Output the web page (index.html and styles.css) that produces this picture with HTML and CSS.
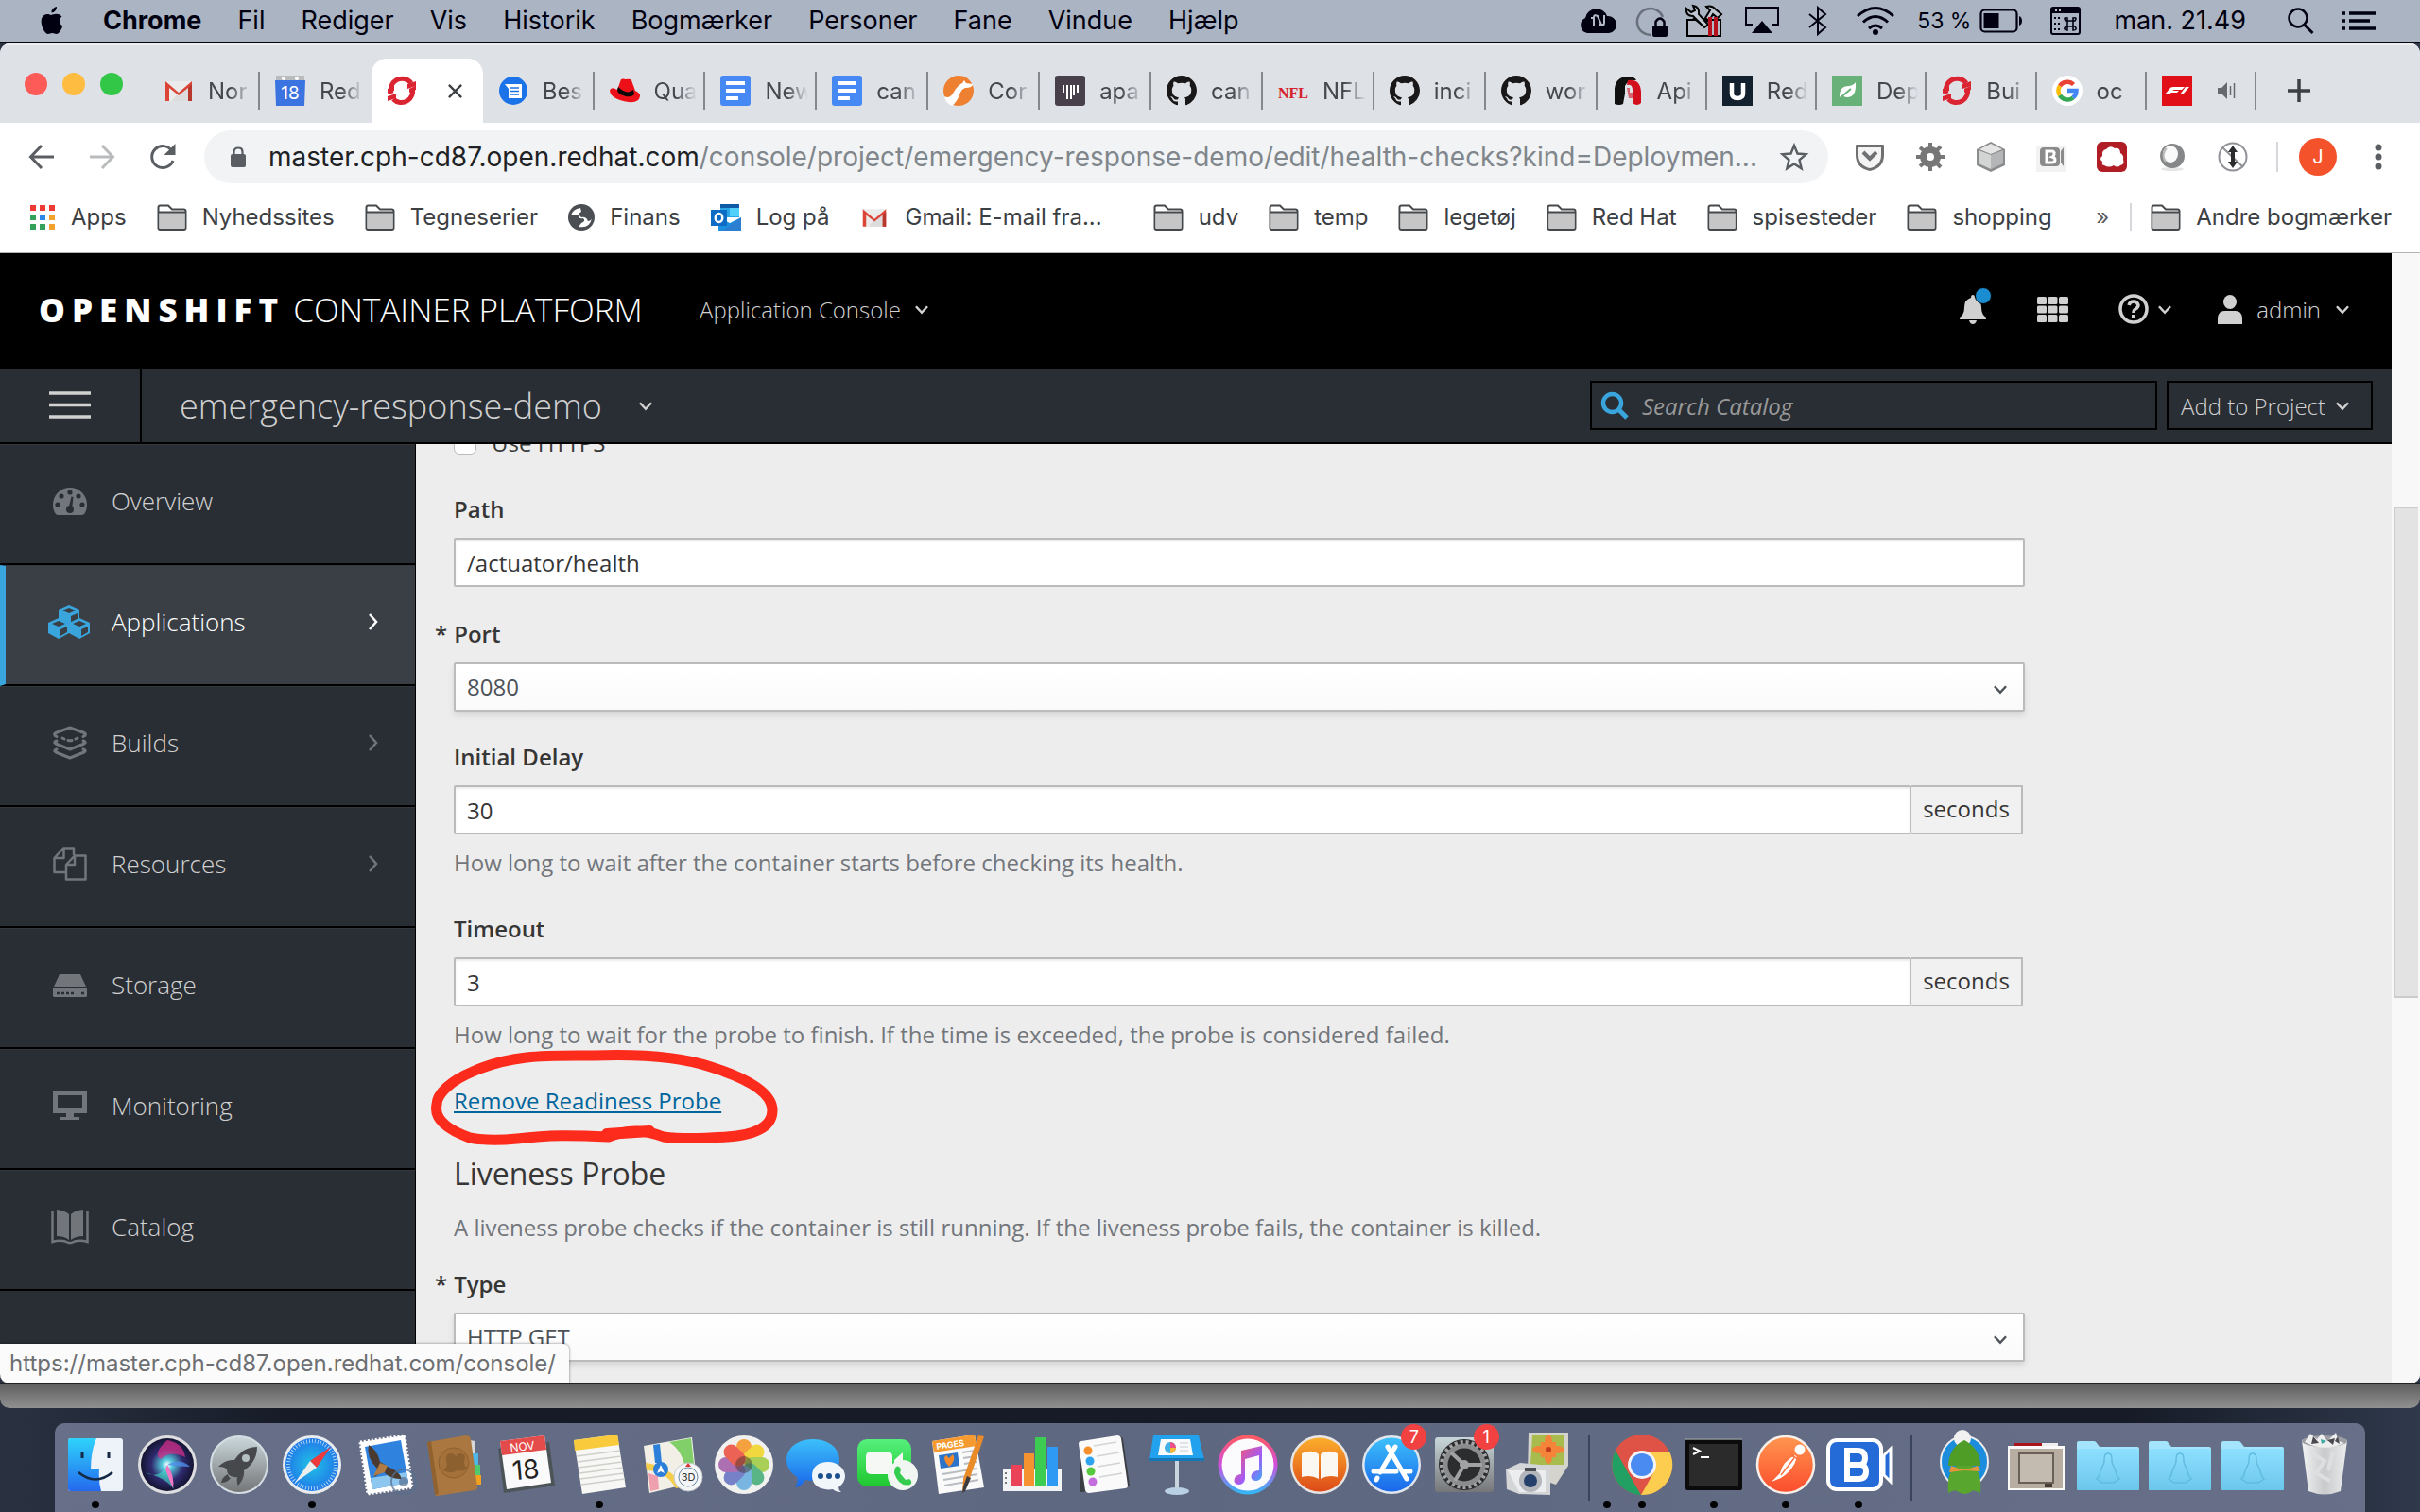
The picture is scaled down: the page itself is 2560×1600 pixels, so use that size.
FILE: index.html
```html
<!DOCTYPE html>
<html lang="da">
<head>
<meta charset="utf-8">
<title>OpenShift Container Platform</title>
<link rel="stylesheet" href="styles.css">
</head>
<body>
<svg class="defs" width="0" height="0" aria-hidden="true">
  <defs>
    <linearGradient id="gFinder" x1="0" y1="0" x2="0" y2="1"><stop offset="0" stop-color="#2fd3fb"/><stop offset="1" stop-color="#2469ee"/></linearGradient>
    <linearGradient id="gBlue" x1="0" y1="0" x2="0" y2="1"><stop offset="0" stop-color="#3cc0fb"/><stop offset="1" stop-color="#1a67ea"/></linearGradient>
    <radialGradient id="gSafari"><stop offset="0" stop-color="#22c3e6"/><stop offset="1" stop-color="#1f78e8"/></radialGradient>
    <linearGradient id="gSteel" x1="0" y1="0" x2="0" y2="1"><stop offset="0" stop-color="#c9d7da"/><stop offset="1" stop-color="#757678"/></linearGradient>
    <linearGradient id="gOrange" x1="0" y1="0" x2="0" y2="1"><stop offset="0" stop-color="#fcae2c"/><stop offset="1" stop-color="#dd4a18"/></linearGradient>
    <linearGradient id="gGreen" x1="0" y1="0" x2="0" y2="1"><stop offset="0" stop-color="#55f07c"/><stop offset="1" stop-color="#1fc72f"/></linearGradient>
    <linearGradient id="gPink" x1="0" y1="0" x2="0" y2="1"><stop offset="0" stop-color="#fb5b63"/><stop offset="0.5" stop-color="#d24ddf"/><stop offset="1" stop-color="#37b6f6"/></linearGradient>
    <linearGradient id="gNote" x1="0" y1="0" x2="1" y2="1"><stop offset="0" stop-color="#ff5562"/><stop offset="0.6" stop-color="#a45bf5"/><stop offset="1" stop-color="#2fb3f5"/></linearGradient>
    <linearGradient id="gPost" x1="0" y1="0" x2="0" y2="1"><stop offset="0" stop-color="#ff9650"/><stop offset="1" stop-color="#fb4c2c"/></linearGradient>
    <linearGradient id="gFolder" x1="0" y1="0" x2="0" y2="1"><stop offset="0" stop-color="#8ee0fe"/><stop offset="1" stop-color="#6bc6ec"/></linearGradient>
    <linearGradient id="gTrash" x1="0" y1="0" x2="1" y2="0"><stop offset="0" stop-color="#f2f3f4"/><stop offset="0.5" stop-color="#c9cacc"/><stop offset="1" stop-color="#eceded"/></linearGradient>
    <radialGradient id="gSiri"><stop offset="0" stop-color="#ffffff"/><stop offset="0.2" stop-color="#56c9dd"/><stop offset="0.6" stop-color="#2f2a6e"/><stop offset="1" stop-color="#141432"/></radialGradient>
    <symbol id="folder" viewBox="0 0 32 28"><path d="M1.500 25V3.500q0-2 2-2h8.500l4 4h12.500q2 0 2 2V25q0 2-2 2h-25q-2 0-2-2z" fill="#fff" stroke="#46494c" stroke-width="2"/><path d="M2.500 9h27v15.500q0 1.500-1.500 1.500h-24q-1.500 0-1.500-1.500z" fill="#c6c6c6"/><path d="M2 8.500h28" stroke="#46494c" stroke-width="2"/></symbol>
    <symbol id="gmail" viewBox="0 0 32 32"><path d="M2 6h28v21H2z" fill="#ebebeb"/><path d="M16 18L28 8v19H9z" fill="#dcdcdc"/><path d="M2 27V6l14 12L30 6v21h-4V13L16 21 6 13v14z" fill="#dc4437"/><path d="M26 13l4-4v18h-4z" fill="#b8372c"/></symbol>
    <symbol id="openshift" viewBox="0 0 32 32"><path d="M5 19A12 12 0 0 1 26 8M27 13A12 12 0 0 1 7 25" fill="none" stroke="#db2432" stroke-width="5"/><path d="M1 14l7-3v5l-7 3zM22 9l9-3v5l-9 3zM1 22l9-3v5l-9 3zM24 14l7-3v4l-7 3z" fill="#db2432"/></symbol>
    <symbol id="docs" viewBox="0 0 32 32"><rect width="32" height="32" rx="3" fill="#4688f4"/><path d="M6 6h20v4H6zM6 14h20v4H6zM6 22h13v4H6z" fill="#fff"/></symbol>
    <symbol id="github" viewBox="0 0 16 16"><path fill="#191717" d="M8 0C3.580 0 0 3.580 0 8c0 3.540 2.290 6.530 5.470 7.590.4.070.55-.17.55-.38 0-.19-.01-.82-.01-1.490-2.010.37-2.530-.49-2.690-.94-.09-.23-.48-.94-.82-1.130-.28-.15-.68-.52-.01-.53.63-.01 1.080.58 1.230.82.72 1.210 1.870.87 2.330.66.07-.52.28-.87.51-1.070-1.780-.2-3.640-.89-3.640-3.950 0-.87.31-1.590.82-2.150-.08-.2-.36-1.020.08-2.120 0 0 .67-.21 2.200.82.64-.18 1.320-.27 2-.27s1.360.09 2 .27c1.530-1.040 2.200-.82 2.200-.82.44 1.100.16 1.920.08 2.120.51.56.82 1.270.82 2.150 0 3.070-1.870 3.750-3.650 3.950.29.25.54.73.54 1.480 0 1.070-.01 1.930-.01 2.200 0 .21.15.46.55.38A8.010 8.010 0 0 0 16 8c0-4.420-3.580-8-8-8z"/></symbol>
    <symbol id="down" viewBox="0 0 14 10"><path d="M1.500 2L7 8l5.500-6" fill="none" stroke="currentColor" stroke-width="2.200"/></symbol>
    <symbol id="right" viewBox="0 0 12 20"><path d="M2 2l7 8-7 8" fill="none" stroke="currentColor" stroke-width="2.500"/></symbol>
    <symbol id="cube" viewBox="0 0 22 22"><path d="M11 0l11 5v11l-11 6-11-6V5z" fill="#39a5dc"/><path d="M11 3l7 3-7 3-7-3zM13 12l7-3v6l-7 4z" fill="#393f45"/></symbol>
    <symbol id="dfolder" viewBox="0 0 68 64"><path d="M1 9q0-2 2-2h16q2 0 3 2l3 4h40q2 0 2 2v10H1z" fill="#a5e4fd"/><rect x="1" y="15" width="66" height="44" rx="1" fill="url(#gFolder)"/><path d="M34 20c-4 0-4 4-4 8s-5 10-5 15l-3 4 6 4h12l6-4-3-4c0-5-5-11-5-15s0-8-4-8z" fill="none" stroke="#62bbe0" stroke-width="1.500"/></symbol>
  </defs>
</svg>

<header class="menubar">
  <nav class="menu">
    <svg class="apple" width="28" height="34" viewBox="0 0 28 34"><path d="M19 1c.3 3-2.500 6.500-5.500 6.500C13 4.500 16 1.500 19 1zM24.500 11.500c-3 2-4 7 .8 10-1 3.500-4 8.500-6.500 8.500-2 0-2.500-1-4.500-1s-2.700 1-4.500 1C6 30 .5 18 3.500 12.500c3-5 7-3.500 9.500-2.500 2.500-.8 7.500-3 11.500 1.500z" fill="#000010" transform="translate(0 1)"/></svg>
    <b>Chrome</b><span>Fil</span><span>Rediger</span><span>Vis</span><span>Historik</span><span>Bogmærker</span><span>Personer</span><span>Fane</span><span>Vindue</span><span>Hjælp</span>
  </nav>
  <div class="status">
    <svg width="40" height="28" viewBox="0 0 40 28"><path d="M9 27a8.500 8.500 0 0 1-2-16A12 12 0 0 1 30 9a9 9 0 0 1 2 18z" fill="#000010"/><path d="M16 20V10q0-3 4-1l4 9q3 2 3-2V8M13 11h4M26 18h-4" fill="none" stroke="#b4bbc6" stroke-width="2"/></svg>
    <svg class="lock" width="36" height="34" viewBox="0 0 36 34"><path d="M18 32A14 14 0 1 1 30 13" fill="none" stroke="#68707c" stroke-width="2.500"/><rect x="19" y="22" width="16" height="12" rx="2" fill="#000010"/><path d="M22.500 22v-4q4.500-7 9 0v4" fill="none" stroke="#000010" stroke-width="2.500"/></svg>
    <svg width="40" height="34" viewBox="0 0 40 34"><path d="M3 16h35v17H3z" fill="#b4bbc6" stroke="#000" stroke-width="2"/><path d="M8 14h20l-8 10z" fill="#000"/><path d="M2 4q-1 8 7 8l12 12 4-3L15 10q1-8-6-9l2 5-4 2zM23 2q6-2 10 3l6 5-4 4-5-4-4 7-4-3 5-8z" fill="#c0c6d0" stroke="#000" stroke-width="2"/><path d="M25 13h4v20h-4zM31 13h4v20h-4z" fill="#b5101b"/></svg>
    <svg width="38" height="32" viewBox="0 0 38 32"><path d="M9 20H2V2h34v18h-7" fill="none" stroke="#000010" stroke-width="2"/><path d="M19 16l11 13H8z" fill="#000010"/></svg>
    <svg class="bt" width="22" height="32" viewBox="0 0 22 32"><path d="M2 9l17 14-8 7V2l8 7L2 23" fill="none" stroke="#000010" stroke-width="2"/></svg>
    <svg width="42" height="32" viewBox="0 0 42 32"><path d="M2 11q19-17 38 0M8 17.500q13-12 26 0M14 24q7-6 14 0" fill="none" stroke="#000010" stroke-width="3"/><circle cx="21" cy="28" r="3" fill="#000010"/></svg>
    <span class="pct">53 %</span>
    <svg class="batt" width="46" height="26" viewBox="0 0 46 26"><rect x="1.500" y="1.500" width="38" height="23" rx="4" fill="none" stroke="#000010" stroke-width="2.200"/><path d="M4.500 5h16v16h-16z" fill="#000010"/><path d="M42 8q3 1 3 5t-3 5z" fill="#000010"/></svg>
    <svg width="32" height="30" viewBox="0 0 32 30"><rect x="1" y="1" width="30" height="28" rx="2" fill="none" stroke="#000010" stroke-width="2"/><path d="M2 2h28v5H2z" fill="#000010"/><path d="M5 4h2M9 4h2" stroke="#fff" stroke-width="1.500"/><path d="M4 12h2M8 12h2M4 18h2M8 18h2M4 24h2M8 24h2" stroke="#000010" stroke-width="2"/><path d="M18 15h6v6h-6zM18 15h-2q-3-4 2-3zM24 15h2q3-4-2-3zM18 21h-2q-3 4 2 4zM24 21h2q3 4-2 4z" fill="none" stroke="#000010" stroke-width="1.600"/></svg>
    <span class="clock">man. 21.49</span>
    <svg width="30" height="30" viewBox="0 0 30 30"><circle cx="12" cy="12" r="9.500" fill="none" stroke="#000010" stroke-width="2.500"/><path d="M18.500 19l9 9" stroke="#000010" stroke-width="3"/></svg>
    <svg class="list" width="38" height="22" viewBox="0 0 38 22"><path d="M1 3h4M9 3h28M1 11h4M9 11h22M1 19h4M9 19h28" stroke="#000010" stroke-width="3.500"/></svg>
  </div>
</header>

<div class="window">
  <div class="tabstrip">
    <div class="lights"><i class="red"></i><i class="yellow"></i><i class="green"></i></div>
    <div class="tabs">
      <div class="tab"><svg><use href="#gmail"/></svg><span>Nor</span></div>
      <div class="tab plain"><svg viewBox="0 0 32 32"><path d="M1 0h30v6H1z" fill="#b9bbbd"/><path d="M0 5h32l-1 27H1z" fill="#3b74e0"/><circle cx="9" cy="3" r="2" fill="#fff"/><circle cx="23" cy="3" r="2" fill="#fff"/><text x="16" y="25" text-anchor="middle" class="cal">18</text></svg><span>Red</span></div>
      <div class="tab active"><svg><use href="#openshift"/></svg><svg class="x" viewBox="0 0 18 18"><path d="M2 2l14 14M16 2L2 16" stroke="#3c4043" stroke-width="2.500"/></svg></div>
      <div class="tab"><svg viewBox="0 0 32 32"><circle cx="16" cy="16" r="15" fill="#1a73e8"/><path d="M7 9h18v15H11V14z" fill="#fff"/><path d="M13 13h9M13 16.500h9M13 20h9" stroke="#1a73e8" stroke-width="1.500"/></svg><span>Bes</span></div>
      <div class="tab"><svg viewBox="0 0 32 32"><path d="M8 15L12 4q2-1 5 0 5-1 6 1l4 11q6 3 5 6-1 7-12 6Q1 25 0 16q1-5 8-1z" fill="#ee1018"/><path d="M8 15q0 5 9 7 8 1 9-3l-1-4q-7 6-16-3z" fill="#080808"/></svg><span>Qua</span></div>
      <div class="tab"><svg><use href="#docs"/></svg><span>New</span></div>
      <div class="tab"><svg><use href="#docs"/></svg><span>can</span></div>
      <div class="tab"><svg viewBox="0 0 32 32"><circle cx="16" cy="16" r="16" fill="#ee8131"/><path d="M1 22q5 3 9-3 4-8 10-11l2-3 2 3 7 1q0 4-8 4-5 2-6 8-3 7-8 11-7-3-8-10z" fill="#fff"/></svg><span>Cor</span></div>
      <div class="tab"><svg viewBox="0 0 32 32"><rect width="32" height="32" rx="3" fill="#48404a"/><path d="M9 10v8M13 10v15M17 10v15M20 10v11M24 10v8" stroke="#fff" stroke-width="2"/></svg><span>apa</span></div>
      <div class="tab"><svg><use href="#github"/></svg><span>can</span></div>
      <div class="tab"><svg viewBox="0 0 32 32"><text x="16" y="24" text-anchor="middle" class="nfl">NFL</text></svg><span>NFL</span></div>
      <div class="tab"><svg><use href="#github"/></svg><span>inci</span></div>
      <div class="tab"><svg><use href="#github"/></svg><span>wor</span></div>
      <div class="tab slim"><svg viewBox="0 0 32 32"><path d="M2 30V14Q3 1 17 1q6 0 8 4-9-1-12 6v8l-2 11q-4 2-9 0z" fill="#101010"/><path d="M16 5q13-2 14 12v12q-4 4-9 0V15q0-6-6-5z" fill="#d10f1d"/><path d="M15 13h3v5h3v6h-4z" fill="#d10f1d" opacity=".6"/></svg><span>Api</span></div>
      <div class="tab slim"><svg viewBox="0 0 32 32"><path d="M0 0h32v32H0z" fill="#13212f"/><path d="M10 8v11q0 5 6 5t6-5V8" fill="none" stroke="#fff" stroke-width="4.500"/></svg><span>Red</span></div>
      <div class="tab slim"><svg viewBox="0 0 32 32"><path d="M0 0h32v32H0z" fill="#68b279"/><path d="M25 7q1 16-9 16-3 0-5-2l-3 3q-1-13 10-13 5-1 7-4z" fill="#fff"/><path d="M7 25l13-11" stroke="#68b279" stroke-width="2"/></svg><span>Dep</span></div>
      <div class="tab slim"><svg><use href="#openshift"/></svg><span>Bui</span></div>
      <div class="tab slim"><svg viewBox="0 0 32 32"><circle cx="16" cy="16" r="16" fill="#fff"/><g fill="none" stroke-width="4.500"><path d="M22.500 9.500A9.500 9.500 0 0 0 8 11" stroke="#ea4335"/><path d="M8 11a9.500 9.500 0 0 0 0 10" stroke="#fbbc05"/><path d="M8 21a9.500 9.500 0 0 0 14 2.500" stroke="#34a853"/><path d="M22 23.500q3.500-3 3.500-7.500H16" stroke="#4285f4"/></g></svg><span>oc</span></div>
      <div class="tab slim"><svg viewBox="0 0 32 32"><path d="M0 0h32v32H0z" fill="#e10f17"/><path d="M3 20l5-6q1-2 4-2h12l-3 3h-8l-2 1h7l-2 2H10l-3 2zM22 20l7-8h-4l-6 8z" fill="#fff"/></svg><svg class="sound" viewBox="0 0 20 18"><path d="M0 6h4l6-6v18l-6-6H0z" fill="#66696d"/><path d="M13.500 4v10M17.500 1v16" stroke="#66696d" stroke-width="1.500"/></svg></div>
    </div>
    <button class="newtab" aria-label="Ny fane"><svg width="24" height="24" viewBox="0 0 24 24"><path d="M12 0v24M0 12h24" stroke="#3c4043" stroke-width="3.500"/></svg></button>
  </div>

  <div class="toolbar">
    <svg width="28" height="28" viewBox="0 0 28 28"><path d="M27 14H3M14 2L2.500 14 14 26" fill="none" stroke="#5a5e63" stroke-width="3"/></svg>
    <svg width="28" height="28" viewBox="0 0 28 28"><path d="M1 14h24M14 2l11.500 12L14 26" fill="none" stroke="#b9bbbd" stroke-width="3"/></svg>
    <svg width="28" height="28" viewBox="0 0 28 28"><path d="M24 8A11.500 11.500 0 1 0 25 18" fill="none" stroke="#5a5e63" stroke-width="3"/><path d="M27.500 0v12H15.500z" fill="#5a5e63"/></svg>
    <div class="omnibox">
      <svg width="16" height="22" viewBox="0 0 16 22"><rect y="8" width="16" height="14" rx="2" fill="#5a5e63"/><path d="M3.500 9V6q0-4.500 4.500-4.500T12.500 6v3" fill="none" stroke="#5a5e63" stroke-width="2.200"/></svg>
      <div class="url"><b>master.cph-cd87.open.redhat.com</b>/console/project/emergency-response-demo/edit/health-checks?kind=Deploymen...</div>
      <svg width="30" height="28" viewBox="0 0 30 28"><path d="M15 2l3.500 8.500 9 .8-7 6 2.200 9L15 21.500 7.300 26.300l2.200-9-7-6 9-.8z" fill="none" stroke="#5a5e63" stroke-width="2.400"/></svg>
    </div>
    <div class="exts">
      <svg viewBox="0 0 32 32"><path d="M2 3h28q1 0 1 1v10q0 14-15 17Q1 28 1 14V4q0-1 1-1z" fill="#6f7072"/><path d="M4 6h24v8q0 11-12 14Q4 25 4 14z" fill="#f3f3f3"/><path d="M9 11l7 7 7-7" fill="none" stroke="#6f7072" stroke-width="4"/></svg>
      <svg viewBox="0 0 32 32"><circle cx="16" cy="16" r="7.500" fill="none" stroke="#777" stroke-width="7"/><g stroke="#777" stroke-width="4"><path d="M16 1v6M16 25v6M1 16h6M25 16h6M5 6l5 4M22 22l5 5M5 26l5-4M22 10l5-5"/></g></svg>
      <svg viewBox="0 0 32 32"><path d="M16 0l15 8v17l-15 7-15-7V8z" fill="#8b8c8d"/><path d="M3 9l13 5v15L3 23z" fill="#d3d4d4"/><path d="M29 9l-13 5v15l13-6z" fill="#b5b6b7"/><path d="M4 8l12-6 12 6-12 5z" fill="#e5e5e5"/></svg>
      <svg viewBox="0 0 32 32"><path d="M0 4h32v28H0z" fill="#f2f2f2"/><rect x="4" y="6" width="21" height="20" rx="4" fill="#8b8b8b"/><path d="M11 10h5q4 0 3 3 0 2-2 3 3 1 3 3 0 3-4 3h-5z" fill="none" stroke="#fff" stroke-width="3"/><path d="M26 10l3-4v20l-3-4z" fill="#8b8b8b"/></svg>
      <svg viewBox="0 0 32 32"><rect width="32" height="32" rx="6" fill="#b11d25"/><path d="M8 25q-3 0-2-4-4-3 0-6-1-6 4-7 4-5 9-1 6-1 6 5 4 2 3 7 2 5-3 6-3 3-7 0-5 3-10 0z" fill="#fff"/></svg>
      <svg viewBox="0 0 32 32"><ellipse cx="16" cy="29" rx="12" ry="2" fill="#e6e6e6"/><circle cx="16" cy="15" r="13" fill="#858789"/><ellipse cx="14" cy="13" rx="8" ry="9" fill="#fafafa"/><path d="M10 7a10 10 0 0 0-1 14" fill="none" stroke="#bbb" stroke-width="2"/></svg>
      <svg viewBox="0 0 32 32"><circle cx="16" cy="16" r="14.500" fill="#fff" stroke="#909296" stroke-width="2"/><path d="M5 6l22 21" stroke="#909296" stroke-width="2"/><path d="M16 4l5 7h-3v10h3l-5 7-5-7h3V11h-3z" fill="#2a2c2e"/></svg>
    </div>
    <span class="vsep"></span>
    <span class="avatar">J</span>
    <svg width="8" height="28" viewBox="0 0 8 28"><g fill="#5a5e63"><circle cx="4" cy="4" r="3.500"/><circle cx="4" cy="14" r="3.500"/><circle cx="4" cy="24" r="3.500"/></g></svg>
  </div>

  <nav class="bookmarks">
    <a href="#"><svg class="s28" viewBox="0 0 28 28"><g stroke-width="6" fill="none"><path d="M1 4h6M11 4h6M21 4h6" stroke="#ee3a34"/><path d="M1 14h6" stroke="#34a15a"/><path d="M11 14h6" stroke="#2f86ea"/><path d="M21 14h6" stroke="#f0a22c"/><path d="M1 24h6M11 24h6" stroke="#34a15a"/><path d="M21 24h6" stroke="#f0a22c"/></g></svg>Apps</a>
    <a href="#"><svg><use href="#folder"/></svg>Nyhedssites</a>
    <a href="#"><svg><use href="#folder"/></svg>Tegneserier</a>
    <a href="#"><svg class="s28" viewBox="0 0 28 28"><circle cx="14" cy="14" r="14" fill="#4b4e52"/><path d="M13 4q-8 1-10 8 4-2 8 0 0 4 5 3 3 3-2 5l-3 4q12 2 14-9-1 3-4 3-2-5-7-4-5-4 0-6z" fill="#fff"/></svg>Finans</a>
    <a href="#"><svg viewBox="0 0 32 28"><path d="M10 0h20v14H10z" fill="#2aa5e8"/><path d="M10 0h20v4H10z" fill="#0f5ba8"/><path d="M20 4h10v9H20z" fill="#4fd0fb"/><path d="M8 14l12 6 12-6v14H8z" fill="#1b8fe0"/><path d="M32 14L12 28h20z" fill="#2c7fd0"/><path d="M0 6h17v17H0z" fill="#0f6cc4"/><ellipse cx="8.500" cy="14.500" rx="3.700" ry="4.500" fill="none" stroke="#fff" stroke-width="2.500"/></svg>Log på</a>
    <a href="#" class="wide"><svg><use href="#gmail"/></svg>Gmail: E-mail fra...</a>
    <a href="#"><svg><use href="#folder"/></svg>udv</a>
    <a href="#"><svg><use href="#folder"/></svg>temp</a>
    <a href="#"><svg><use href="#folder"/></svg>legetøj</a>
    <a href="#"><svg><use href="#folder"/></svg>Red Hat</a>
    <a href="#"><svg><use href="#folder"/></svg>spisesteder</a>
    <a href="#"><svg><use href="#folder"/></svg>shopping</a>
    <span class="more">»</span>
    <a href="#" class="other"><svg><use href="#folder"/></svg>Andre bogmærker</a>
  </nav>

  <div class="viewport">
    <div class="page">
      <header class="masthead">
        <div class="brand"><b>OPENSHIFT</b> <span>CONTAINER PLATFORM</span></div>
        <button class="console">Application Console<svg class="chev"><use href="#down"/></svg></button>
        <div class="tools">
          <button class="bell" aria-label="Notifikationer"><svg width="30" height="34" viewBox="0 0 30 34"><path d="M15 2q2 0 2 3 7 2 7 10 0 8 5 11v2H1v-2q5-3 5-11 0-8 7-10 0-3 2-3zM11 29h8q-1 4-4 4t-4-4z" fill="#d1d1d1"/></svg><i></i></button>
          <button aria-label="Programmer"><svg width="33" height="27" viewBox="0 0 33 27"><g fill="#d1d1d1"><rect width="10" height="8" rx="1.500"/><rect x="11.500" width="10" height="8" rx="1.500"/><rect x="23" width="10" height="8" rx="1.500"/><rect y="9.500" width="10" height="8" rx="1.500"/><rect x="11.500" y="9.500" width="10" height="8" rx="1.500"/><rect x="23" y="9.500" width="10" height="8" rx="1.500"/><rect y="19" width="10" height="8" rx="1.500"/><rect x="11.500" y="19" width="10" height="8" rx="1.500"/><rect x="23" y="19" width="10" height="8" rx="1.500"/></g></svg></button>
          <button class="help" aria-label="Hjælp"><svg width="32" height="32" viewBox="0 0 32 32"><circle cx="16" cy="16" r="14" fill="none" stroke="#d1d1d1" stroke-width="3.500"/><path d="M11 12q1-4 5-4t5 4q0 2-3 4-2 1-2 4" fill="none" stroke="#d1d1d1" stroke-width="3.500"/><path d="M14 22h4v4h-4z" fill="#d1d1d1"/></svg><svg class="chev"><use href="#down"/></svg></button>
          <button class="user"><svg width="26" height="31" viewBox="0 0 26 31"><ellipse cx="13" cy="7.500" rx="7" ry="7.500" fill="#d1d1d1"/><path d="M0 31v-7q1-7 7-7h12q6 0 7 7v7z" fill="#d1d1d1"/></svg>admin<svg class="chev"><use href="#down"/></svg></button>
        </div>
      </header>
      <div class="projectbar">
        <button class="burger" aria-label="Menu"><svg width="44" height="29" viewBox="0 0 44 29"><path d="M0 2h44M0 14.500h44M0 27h44" stroke="#d1d1d1" stroke-width="3.500"/></svg></button>
        <button class="project">emergency-response-demo<svg class="chev"><use href="#down"/></svg></button>
        <label class="search"><svg width="30" height="30" viewBox="0 0 30 30"><circle cx="12.500" cy="12.500" r="9.500" fill="none" stroke="#39a5dc" stroke-width="4.500"/><path d="M20 20l8 8" stroke="#39a5dc" stroke-width="5"/></svg><input type="text" placeholder="Search Catalog" aria-label="Search Catalog"></label>
        <button class="add">Add to Project<svg class="chev"><use href="#down"/></svg></button>
      </div>
      <div class="body">
        <nav class="side">
          <a href="#"><svg viewBox="0 0 36 36"><path d="M3 32Q0 28 0 22a18 18 0 0 1 36 0q0 6-3 10-1 1-3 1H6q-2 0-3-1z" fill="#72767b"/><g fill="#292e34"><circle cx="18" cy="9" r="2.600"/><circle cx="9" cy="13" r="2.600"/><circle cx="27" cy="13" r="2.600"/><circle cx="5" cy="22" r="2.600"/><circle cx="31" cy="22" r="2.600"/><circle cx="18" cy="27" r="4"/><path d="M16.500 26l3-12.500 2 .5-1.500 13z"/></g></svg>Overview</a>
          <a href="#" class="current"><svg class="cubes" viewBox="0 0 44 36"><use href="#cube" x="11" y="0" width="22" height="22"/><use href="#cube" x="0" y="14" width="22" height="22"/><use href="#cube" x="22" y="14" width="22" height="22"/></svg>Applications<svg class="go"><use href="#right"/></svg></a>
          <a href="#"><svg viewBox="0 0 36 36"><g fill="none" stroke="#72767b" stroke-width="3" stroke-linecap="round" stroke-linejoin="round"><path d="M3 10.500Q0 9 3 7.500L18 2l15 5.500q3 1.500 0 3M2 10.500l2 1M34 10.500l-2 1"/><path d="M10 13l2 1M16 15.500q2 .7 4 0M24 14l2-1"/><path d="M4 16q-4 1.500-1 3l15 6 15-6q3-1.500-1-3M4 25q-4 1.500-1 3l15 6 15-6q3-1.500-1-3"/></g></svg>Builds<svg class="go"><use href="#right"/></svg></a>
          <a href="#"><svg viewBox="0 0 36 36"><g fill="none" stroke="#72767b" stroke-width="2.500" stroke-linejoin="round"><path d="M13 27H1.500V12L11 1.500h11V9M2 12h9.500V2"/><path d="M14 34.500V19l9-9.500h11.500v25zM14 19h9V10"/></g></svg>Resources<svg class="go"><use href="#right"/></svg></a>
          <a href="#"><svg viewBox="0 0 36 36"><path d="M7 7h22l6 13H1zM0 22h36v8q0 1-2 1H2q-2 0-2-1z" fill="#72767b"/><path d="M4 27h3M9 27h3M14 27h3M19 27h3M30 27h3" stroke="#292e34" stroke-width="2.500"/></svg>Storage</a>
          <a href="#"><svg viewBox="0 0 36 36"><path d="M2.500 4.500h31v19h-31z" fill="none" stroke="#72767b" stroke-width="5"/><path d="M14 26h8v4h6v3H8v-3h6z" fill="#72767b"/></svg>Monitoring</a>
          <a href="#"><svg class="book" viewBox="0 0 40 36"><path d="M6 0q9 1 13 5v27q-5-4-13-4zM34 0q-9 1-13 5v27q5-4 13-4z" fill="#72767b"/><path d="M1.500 2v32q10-3 17 1h3q7-4 17-1V2" fill="none" stroke="#72767b" stroke-width="2.500"/></svg>Catalog</a>
        </nav>
        <main class="content">
          <form class="form">
            <label class="check"><input type="checkbox">Use HTTPS</label>
            <div class="field"><label for="path">Path</label><input id="path" type="text" value="/actuator/health"></div>
            <div class="field required"><label for="port"><span>*</span>Port</label><div class="pick"><select id="port"><option>8080</option></select><svg class="chev"><use href="#down"/></svg></div></div>
            <div class="field"><label for="delay">Initial Delay</label><div class="group"><input id="delay" type="text" value="30"><span>seconds</span></div><p>How long to wait after the container starts before checking its health.</p></div>
            <div class="field"><label for="timeout">Timeout</label><div class="group"><input id="timeout" type="text" value="3"><span>seconds</span></div><p>How long to wait for the probe to finish. If the time is exceeded, the probe is considered failed.</p></div>
            <div class="removal"><a href="#">Remove Readiness Probe</a>
              <svg class="mark" width="390" height="110" viewBox="0 0 390 110"><path d="M20 62C20 50 36 36 58 27 100 8 140 10 186 10 240 8 280 12 310 22 345 33 375 48 375 68 375 86 357 94 327 96 300 98 275 98 260 96 245 90 225 86 202 96 160 94 140 94 105 98 85 100 65 99 55 97 30 88 17 76 20 62z" fill="none" stroke="#fd2b1c" stroke-width="11"/><path d="M200 93l45-3" stroke="#fd2b1c" stroke-width="12" stroke-linecap="round"/></svg></div>
            <h2>Liveness Probe</h2>
            <p class="intro">A liveness probe checks if the container is still running. If the liveness probe fails, the container is killed.</p>
            <div class="field"><label for="type"><span>*</span>Type</label><div class="pick"><select id="type"><option>HTTP GET</option></select><svg class="chev"><use href="#down"/></svg></div></div>
          </form>
        </main>
      </div>
    </div>
    <div class="scroll"><div class="thumb"></div></div>
    <div class="hover">https://master.cph-cd87.open.redhat.com/console/</div>
  </div>
</div>
<div class="behind"></div>

<footer class="dock">
  <div class="app run"><svg viewBox="0 0 64 64"><rect x="3" y="4" width="58" height="56" rx="3" fill="#eef3fa"/><path d="M6 4h27q-6 14-6 33h9q-1 12 2 23H6q-3 0-3-3V7q0-3 3-3z" fill="url(#gFinder)"/><path d="M18 19v6M46 19v6" stroke="#152944" stroke-width="3"/><path d="M14 40q18 15 36 0" fill="none" stroke="#152944" stroke-width="2.500"/></svg></div>
  <div class="app"><svg viewBox="0 0 64 64"><circle cx="32" cy="32" r="31" fill="#dedee0"/><circle cx="32" cy="32" r="28" fill="url(#gSiri)"/><path d="M32 6q17 3 19 18-16-8-26 2Q16 20 32 6z" fill="#d12f88" opacity=".75"/><path d="M8 40q16 8 24-8 4 15 7 26-8-12-31-18z" fill="#43dfc9" opacity=".6"/><path d="M32 32q8 12 6 25-4-9-8-20z" fill="#f077c4"/><path d="M32 32q14-8 24 2-12 0-24-2z" fill="#4f8fe8" opacity=".8"/></svg></div>
  <div class="app"><svg viewBox="0 0 64 64"><circle cx="32" cy="32" r="31" fill="#d3dde2"/><circle cx="32" cy="32" r="29" fill="url(#gSteel)"/><path d="M51 13q-15 0-24 14-9-1-17 7 7 0 9 3 0 5 4 7 5 2 7 1-1 6 1 9 7-8 6-16 14-9 14-25z" fill="#46484b"/><circle cx="39" cy="25" r="4" fill="#b4bfc2"/><path d="M20 42q-6 3-7 9 7 0 10-5-2 0-3-4z" fill="#46484b"/></svg></div>
  <div class="app run"><svg viewBox="0 0 64 64"><circle cx="32" cy="32" r="31" fill="#e9ecef"/><circle cx="32" cy="32" r="28" fill="url(#gSafari)"/><circle cx="32" cy="32" r="25" fill="none" stroke="#a9d4f5" stroke-width="4" stroke-dasharray="1 2"/><path d="M52 13L37 35l-7-7z" fill="#ee3a3c"/><path d="M14 51l16-23 7 7z" fill="#eceded"/></svg></div>
  <div class="app"><svg viewBox="0 0 64 64"><path d="M7 8L54 1l8 55-47 7z" fill="#fff" stroke="#fff" stroke-width="3" stroke-dasharray="2 2"/><path d="M12 13l38-7 8 45-38 7z" fill="#2f82dd"/><path d="M18 46l38-6 2 11-38 7z" fill="#8dc6ee"/><path d="M16 11q9 5 12 18 5 2 8 5 12 4 15 13-11 1-20-8l-9 6 3-9q-12-12-9-25z" fill="#4a3a30"/><path d="M28 30l8 3-3 7-12 4z" fill="#b07b45"/><circle cx="53" cy="50" r="13" fill="none" stroke="#56708f" stroke-width="2" opacity=".7"/><circle cx="53" cy="50" r="5" fill="#56708f" opacity=".7"/></svg></div>
  <div class="app"><svg viewBox="0 0 64 64"><path d="M47 6l6 1v13h-6z" fill="#d8d8d8"/><path d="M48 20h8v12h-8z" fill="#50b8e8"/><path d="M50 32h8v11h-8z" fill="#50c96f"/><path d="M51 43h8v10h-8z" fill="#f2a220"/><path d="M2 8l41-7q4 0 5 4l7 51q0 3-3 3l-40 6q-2 0-2-3z" fill="#a9773f"/><path d="M2 8l4-1 8 56-4 1z" fill="#8f6230"/><circle cx="30" cy="30" r="16" fill="#a4713a" stroke="#8d602f"/><path d="M18 37q7-2 4-9-1-8 5-8 4 0 5 4 2-5 6-4 6 1 3 9 0 5 4 6-5 5-11 3-9 5-16-1z" fill="#8d602f"/></svg></div>
  <div class="app"><svg viewBox="0 0 64 64"><path d="M1 15l6 47 54-8L55 8z" fill="#4c5458"/><path d="M3 7L50 1l7 50-47 7z" fill="#fafafa"/><path d="M3 7L50 1l2 15L5 22z" fill="#e44b4b"/><text x="27" y="17" text-anchor="middle" class="nov" transform="rotate(-7 27 17)">NOV</text><text x="31" y="47" text-anchor="middle" class="n18" transform="rotate(-5 31 47)">18</text></svg></div>
  <div class="app run"><svg viewBox="0 0 64 64"><path d="M5 6L51 0l9 56-46 7z" fill="#f7f7f5"/><path d="M5 6L51 0l2 11L6 17z" fill="#f9cb3c"/><path d="M8 23l46-6M9 29l46-6M10 35l46-6M11 41l46-6M12 47l46-6M13 53l46-6" stroke="#cfcfcb" stroke-width="1.500"/></svg></div>
  <div class="app"><svg viewBox="0 0 64 64"><path d="M2 12L53 3l5 47-50 12z" fill="#f2efe6"/><path d="M29 8l23-4 4 36-10-3q-3-20-17-29z" fill="#80cf68"/><path d="M4 30q24 3 41 25l-9 2Q25 38 5 38z" fill="#f5cd4c"/><path d="M12 11l7-1 2 20h-7z" fill="#2b7fd9"/><path d="M7 41l10 3 1 14-9 2z" fill="#efa0ae"/><circle cx="20" cy="37" r="8" fill="#2b7fd9"/><path d="M20 32l4 9-4-2-4 2z" fill="#fff"/><circle cx="49" cy="45" r="15" fill="#f5f6f7" stroke="#c8ccd0"/><circle cx="49" cy="45" r="10" fill="none" stroke="#6d8aa5"/><path d="M49 30l3 4h-6z" fill="#d33"/><text x="49" y="49" text-anchor="middle" class="t3d">3D</text></svg></div>
  <div class="app"><svg viewBox="0 0 64 64"><circle cx="32" cy="32" r="31" fill="#f1f1f0"/><g opacity=".92"><rect x="24" y="5" width="16" height="26" rx="8" fill="#f79b32"/><rect x="24" y="5" width="16" height="26" rx="8" fill="#f1d62f" transform="rotate(45 32 32)"/><rect x="24" y="5" width="16" height="26" rx="8" fill="#a5cd4b" transform="rotate(90 32 32)"/><rect x="24" y="5" width="16" height="26" rx="8" fill="#4db07c" transform="rotate(135 32 32)"/><rect x="24" y="5" width="16" height="26" rx="8" fill="#6eb1e0" transform="rotate(180 32 32)"/><rect x="24" y="5" width="16" height="26" rx="8" fill="#6d78c4" transform="rotate(225 32 32)"/><rect x="24" y="5" width="16" height="26" rx="8" fill="#a765ad" transform="rotate(270 32 32)"/><rect x="24" y="5" width="16" height="26" rx="8" fill="#ec5748" transform="rotate(315 32 32)"/></g><circle cx="32" cy="32" r="9" fill="#3e2f2a" opacity=".45"/></svg></div>
  <div class="app"><svg viewBox="0 0 64 64"><path d="M29 5c16 0 28 9 28 22S45 49 29 49q-5 0-8-1-4 7-11 8 4-6 2-11Q1 38 1 27C1 14 13 5 29 5z" fill="url(#gBlue)"/><path d="M45 29c10 0 18 7 18 15 0 5-3 9-7 12q0 3 3 5-6 0-9-3C38 60 28 54 28 44s7-15 17-15z" fill="#f1f6fb"/><g fill="#1c4f8d"><circle cx="37" cy="44" r="3"/><circle cx="46" cy="44" r="3"/><circle cx="55" cy="44" r="3"/></g></svg></div>
  <div class="app"><svg viewBox="0 0 64 64"><rect x="0" y="5" width="57" height="50" rx="10" fill="url(#gGreen)"/><rect x="9" y="18" width="28" height="24" rx="5" fill="#f5f8f5"/><path d="M39 27l9-8v22l-9-8z" fill="#f5f8f5"/><circle cx="48" cy="43" r="16" fill="#f2f6f2"/><path d="M41 34q3-2 5 3l-1 4 6 7 4-1q4 3 1 6-12 3-17-12 0-5 2-7z" fill="#34cd50"/></svg></div>
  <div class="app"><svg viewBox="0 0 64 64"><path d="M3 7L48 0l10 56-48 7z" fill="#fafafa"/><path d="M3 7L48 0l2 12L5 19z" fill="#f59a2f"/><path d="M10 22l20-3 2 14-20 3z" fill="#2c74c8"/><path d="M21 34q-8-9-3-12l3 3 4-4q4 6-4 13z" fill="#f58a2a"/><path d="M35 19l13-2M36 25l13-2M37 31l13-2M14 42l36-6M15 48l36-6M16 54l36-6" stroke="#b9bcc0" stroke-width="2"/><text x="8" y="16" class="pages" transform="rotate(-8 8 16)">PAGES</text><path d="M52 1l6 1-16 47-7 13 1-15z" fill="#e98b28"/><path d="M40 44l4 2-6 14-3 2 1-7z" fill="#3c3c40"/></svg></div>
  <div class="app"><svg viewBox="0 0 64 64"><path d="M1 37l62-1v24H1z" fill="#f2f3f5"/><path d="M4 40v14" stroke="#777" stroke-dasharray="2 3" stroke-width="2"/><path d="M10 32h11v23H10z" fill="#ea4256"/><path d="M23 20h11v35H23z" fill="#f59331"/><path d="M35 3h11v52H35z" fill="#3ccc51"/><path d="M48 13h11v42H48z" fill="#2f9af3"/></svg></div>
  <div class="app"><svg viewBox="0 0 64 64"><path d="M8 61q-2 0-2-3L6 8l42-6q3 0 4 3l7 49z" fill="#3b3f44"/><path d="M5 10q0-3 3-3l38-6q3 0 4 3l7 50q0 3-3 3l-38 5q-3 0-4-3z" fill="#fafafa"/><path d="M21 12l24-4M24 23l24-4M25 34l24-4M27 45l24-4" stroke="#d2d3d6" stroke-width="1.500"/><circle cx="15" cy="17" r="4.500" fill="#f58f2b"/><circle cx="17" cy="28" r="4.500" fill="#2fa3ef"/><circle cx="18" cy="39" r="4.500" fill="#57c93d"/><circle cx="20" cy="50" r="4.500" fill="#c46ddd"/></svg></div>
  <div class="app"><svg viewBox="0 0 64 64"><path d="M31 27h4v34h-4z" fill="#c9d3de"/><ellipse cx="33" cy="60" rx="13" ry="4" fill="#b8cfe4"/><path d="M8 1h48l6 26H4z" fill="#21a1ee"/><path d="M4 25h58v3H4z" fill="#1377b8"/><path d="M16 5h31l3 17H13z" fill="#f8fafc"/><circle cx="26" cy="14" r="6" fill="#41b1e8"/><path d="M26 8a6 6 0 0 1 6 6h-6z" fill="#ec5288"/><path d="M26 20a6 6 0 0 0 6-6h-6z" fill="#f5b936"/><path d="M36 9h9M36 13h9M36 17h9" stroke="#c7cdd4"/></svg></div>
  <div class="app"><svg viewBox="0 0 64 64"><circle cx="32" cy="32" r="29.500" fill="#fbfafc" stroke="url(#gPink)" stroke-width="4"/><path d="M25 17l22-5v31q-1 6-7 6-6-1-4-7 3-4 8-4V22l-15 4v21q-1 6-7 6-6-1-4-7 3-4 7-4z" fill="url(#gNote)"/></svg></div>
  <div class="app"><svg viewBox="0 0 64 64"><circle cx="32" cy="32" r="31" fill="#e7e5e3"/><circle cx="32" cy="32" r="28.500" fill="url(#gOrange)"/><path d="M13 20q11-5 18 1v26q-8-5-18-2zM51 20q-11-5-18 1v26q8-5 18-2z" fill="#fbf7f1"/></svg></div>
  <div class="app"><svg viewBox="0 0 64 64"><circle cx="32" cy="32" r="31" fill="#dfe6ee"/><circle cx="32" cy="32" r="28.500" fill="url(#gBlue)"/><g stroke="#fff" stroke-width="5" stroke-linecap="round"><path d="M28 13l20 34M36 13L20 40M13 39h24M46 39h6M17 46l-1 2"/></g></svg><em>7</em></div>
  <div class="app"><svg viewBox="0 0 64 64"><rect x="1" y="3" width="62" height="58" rx="3" fill="url(#gSteel)"/><circle cx="32" cy="32" r="27" fill="#2c2d2f"/><circle cx="32" cy="32" r="20" fill="none" stroke="#8a8c8e" stroke-width="5"/><circle cx="32" cy="32" r="24" fill="none" stroke="#a2a4a6" stroke-width="4" stroke-dasharray="3 3"/><path d="M32 32L18 19M32 32l19 0M32 32L22 49" stroke="#a0a2a4" stroke-width="4"/><circle cx="32" cy="32" r="5" fill="#a0a2a4"/></svg><em>1</em></div>
  <div class="app"><svg viewBox="0 0 64 64"><path d="M24-2h42v35l-13 20-30-10z" fill="#d5d4cc"/><path d="M28 1h34v31H26z" fill="#a8bb4d"/><g fill="#f3843a"><ellipse cx="45" cy="8" rx="4" ry="8"/><ellipse cx="45" cy="24" rx="4" ry="7"/><ellipse cx="36" cy="16" rx="8" ry="4"/><ellipse cx="54" cy="16" rx="8" ry="4"/><ellipse cx="45" cy="16" rx="4" ry="11" transform="rotate(45 45 16)"/><ellipse cx="45" cy="16" rx="4" ry="11" transform="rotate(-45 45 16)"/></g><circle cx="45" cy="16" r="3" fill="#c23a1c"/><path d="M0 37l15-7 32 3v31l-33-1-13-5z" fill="#d4d5d7"/><path d="M2 38h40v23H14z" fill="#ecedee"/><circle cx="26" cy="49" r="12" fill="#b3b6ba"/><circle cx="26" cy="49" r="7" fill="#24406b"/><path d="M20 35h12v4H20z" fill="#4b4f55"/></svg></div>
  <div class="sep early"></div>
  <div class="app run"><svg viewBox="0 0 64 64"><circle cx="32" cy="32" r="32" fill="#de5346"/><path d="M4 17l17 30 10 17A32 32 0 0 1 4 17z" fill="#22a063"/><path d="M32 18h29a32 32 0 0 1-30 46l14-25z" fill="#fccd4f"/><circle cx="32" cy="32" r="15" fill="#f3f4f6"/><circle cx="32" cy="32" r="12" fill="#4a8bf2"/></svg></div>
  <div class="app run"><svg viewBox="0 0 64 64"><rect x="2" y="5" width="60" height="54" rx="2" fill="#0b0b0b"/><path d="M6 10h52v45H6z" fill="#2b2b2b"/><path d="M2 5h60" stroke="#8c9499" stroke-width="1.500"/><path d="M10 14l7 3.500-7 3.500M18 24h9" fill="none" stroke="#fff" stroke-width="2"/></svg></div>
  <div class="app run"><svg viewBox="0 0 64 64"><circle cx="32" cy="32" r="30" fill="url(#gPost)" stroke="#f7efe9" stroke-width="2.500"/><circle cx="47" cy="16" r="5.500" fill="#fff"/><path d="M42 22q-13 6-16 19l-9 9 10-4q13-8 17-22z" fill="#fff"/><path d="M41 25L27 43M38 22l7 4" stroke="#fd7140" stroke-width="1.500"/></svg></div>
  <div class="app run"><svg viewBox="0 0 64 64"><rect x="0" y="6" width="56" height="52" rx="9" fill="#246bd8" stroke="#fff" stroke-width="4"/><path d="M20 17v30h12q8 0 8-8 0-6-5-7 4-2 4-7 0-8-8-8zM20 32h14" fill="none" stroke="#fff" stroke-width="6"/><path d="M59 22l7-7v35l-7-7z" fill="#246bd8" stroke="#fff" stroke-width="3"/></svg></div>
  <div class="sep"></div>
  <div class="app"><svg viewBox="0 0 64 64"><ellipse cx="32" cy="29" rx="25" ry="27" fill="#1c8cdc" stroke="#eee" stroke-width="2"/><circle cx="30" cy="4" r="9" fill="#f1f1f1"/><path d="M32 6q17 9 17 27H15Q16 13 32 6z" fill="#4f9c27"/><path d="M15 62q-2-23 9-29h16q11 6 9 29-9-4-9-2-7 6-16 0-2-2-9 2z" fill="#58a62d"/><path d="M18 33q14 7 28 0l3 6-17-1-16 2z" fill="#e5963a"/></svg></div>
  <div class="app"><svg viewBox="0 0 64 64"><path d="M9 9h30v7H9z" fill="#a9131b"/><path d="M38 9h17v7H38z" fill="#eee"/><path d="M2 12h60v47H2z" fill="#faf9f7"/><path d="M4 15h56v42H4z" fill="#b8ada1"/><path d="M14 20h36v31H14z" fill="#c3bab0" stroke="#6a6058" stroke-width="2"/><path d="M41 52h8v4h-8z" fill="#463d38"/></svg></div>
  <div class="app"><svg class="fold"><use href="#dfolder"/></svg></div>
  <div class="app"><svg class="fold"><use href="#dfolder"/></svg></div>
  <div class="app"><svg class="fold"><use href="#dfolder"/></svg></div>
  <div class="app"><svg viewBox="0 0 64 64"><path d="M8 6q24-8 48 0l-7 54q-17 7-34 0z" fill="url(#gTrash)"/><ellipse cx="32" cy="7" rx="24" ry="6" fill="#9a9da1"/><path d="M11 8L17-1l7 6 5-6 6 8 9-9 3 9 6 2q-21 10-42-1z" fill="#eee"/><path d="M20 2l6 7-8 1zM35 6l8-2-2 7zM46 2l2 8-5-3z" fill="#4a4a50"/><path d="M28 5l6 2-5 3z" fill="#3aa7a0"/><path d="M19 20l13 8-9 13 15 8M41 18l-5 20" stroke="#dedfe0" stroke-width="4" fill="none"/></svg></div>
</footer>
</body>
</html>
```
FILE: styles.css
```css
* { box-sizing: border-box; }
body {
  margin: 0;
  height: 100vh;
  display: flex;
  flex-direction: column;
  overflow: hidden;
  background: linear-gradient(90deg, #2a3242, #161b27 12%, #161b27 88%, #2f394b);
  font-family: "Open Sans", sans-serif;
  font-size: 24px;
}
svg { display: block; flex: none; overflow: visible; }
.defs { position: absolute; }
a { text-decoration: none; color: inherit; }
button { border: 0; background: none; padding: 0; margin: 0; font: inherit; color: inherit; display: flex; align-items: center; }
p, h2 { margin: 0; }

/* system menu bar */
.menubar {
  flex: none;
  height: 46px;
  border-bottom: 2px solid #05070f;
  background: #abb4c2;
  color: #000010;
  font: 27px/44px Inter, sans-serif;
  display: flex;
  justify-content: space-between;
  padding: 0 46px 0 41px;
}
.menu, .status { display: flex; align-items: center; }
.menu { gap: 38px; }
.apple { margin-right: 2px; }
.status { gap: 23px; }
.status .lock { margin: 0 -6px 0 -4px; }
.status .bt { margin: 0 6px; }
.status .list { margin-left: 4px; }
.pct { font-size: 23px; margin-right: -14px; }
.batt { margin-right: 6px; }
.clock { margin: 0 20px 0 12px; }

/* browser window */
.window {
  flex: 1;
  min-height: 0;
  display: flex;
  flex-direction: column;
  overflow: hidden;
  border-radius: 10px;
  background: #fff;
  font-family: Inter, sans-serif;
}
.tabstrip { flex: none; height: 84px; background: #dee1e6; display: flex; border-top: 2px solid #eceef0; }
.lights { width: 157px; flex: none; display: flex; gap: 16px; padding: 29px 0 0 26px; }
.lights i { width: 24px; height: 24px; border-radius: 50%; }
.red { background: #fc5b57; }
.yellow { background: #febc40; }
.green { background: #33c748; }
.tabs { flex: 1; min-width: 0; display: flex; padding-top: 14px; }
.tab {
  flex: 118 1 0;
  min-width: 0;
  height: 68px;
  display: flex;
  align-items: center;
  gap: 15px;
  padding: 0 4px 0 16px;
  position: relative;
  color: #45494d;
  font-size: 24px;
}
.tab.slim { flex-grow: 116; }
.tab svg { width: 32px; height: 32px; }
.tab span {
  flex: 1;
  min-width: 0;
  white-space: nowrap;
  -webkit-mask: linear-gradient(90deg, #000 45%, transparent 90%);
  mask: linear-gradient(90deg, #000 45%, transparent 90%);
}
.tab::after { content: ""; position: absolute; right: 0; top: 14px; width: 2px; height: 40px; background: #85898e; }
.tab.plain::after, .tab.active::after { display: none; }
.tab.active { background: #fff; border-radius: 16px 16px 0 0; gap: 32px; }
.tab .x { width: 17px; height: 17px; }
.tab .sound { width: 20px; height: 18px; margin-left: 12px; }
.cal { font: 19px Inter, sans-serif; fill: #fff; }
.nfl { font: bold 16px "Liberation Serif", serif; fill: #d6202b; }
.newtab { width: 173px; flex: none; padding: 14px 0 0 33px; }

.toolbar { flex: none; height: 72px; display: flex; align-items: center; padding: 0 40px 0 30px; gap: 36px; }
.omnibox {
  flex: 1;
  min-width: 0;
  height: 56px;
  margin-left: -6px;
  border-radius: 28px;
  background: #f1f3f4;
  display: flex;
  align-items: center;
  padding: 0 21px 0 28px;
}
.url { flex: 1; min-width: 0; overflow: hidden; white-space: nowrap; color: #80868b; font-size: 28px; margin: 0 24px; }
.url b { font-weight: 400; color: #202124; }
.exts { display: flex; gap: 32px; margin: 0 -6px 0 -8px; }
.exts svg { width: 32px; height: 32px; }
.vsep { width: 2px; height: 32px; background: #d5d7da; margin-right: -14px; }
.avatar { width: 40px; height: 40px; border-radius: 50%; background: #f4522a; color: #fff; font-size: 20px; line-height: 40px; text-align: center; margin-right: 4px; }

.bookmarks {
  flex: none;
  height: 66px;
  border-bottom: 1px solid #b4b4b4;
  display: flex;
  align-items: center;
  gap: 32px;
  padding: 0 30px 10px 31px;
  color: #3c4043;
  font-size: 24px;
  white-space: nowrap;
}
.bookmarks a { display: flex; align-items: center; gap: 16px; }
.bookmarks svg { width: 32px; height: 28px; }
.bookmarks .s28 { width: 28px; }
.bookmarks .wide { margin-right: 22px; }
.more { margin-left: auto; color: #5a5e63; }
.other { border-left: 2px solid #d5d7da; padding-left: 20px; margin-left: -10px; }

/* console page */
.viewport { flex: 1; min-height: 0; display: flex; position: relative; font-family: "Open Sans", sans-serif; }
.page { flex: 1; min-width: 0; display: flex; flex-direction: column; background: #ededed; }
.scroll { width: 30px; flex: none; background: #f8f8f8; padding: 268px 2px 0; }
.thumb { height: 520px; background: #e3e3e3; border: 2px solid #cbcbcb; border-right: 0; }
.chev { width: 16px; height: 11px; }

.masthead {
  flex: none;
  height: 122px;
  background: #000;
  color: #d1d1d1;
  display: flex;
  align-items: center;
  padding: 0 44px 4px 41px;
}
.brand { color: #fff; font-size: 35px; font-weight: 300; width: 699px; white-space: nowrap; }
.brand b { font-weight: 800; letter-spacing: 7px; }
.console { font-weight: 300; gap: 14px; }
.tools { margin-left: auto; display: flex; align-items: center; font-weight: 300; }
.tools > * { margin-left: 53px; }
.tools .help { gap: 9px; }
.tools .user { gap: 15px; margin-left: 48px; }
.bell { position: relative; }
.bell i { position: absolute; left: 17px; top: -6px; width: 18px; height: 18px; border-radius: 50%; background: #1a8cd0; border: 1px solid #000; }

.projectbar {
  flex: none;
  height: 80px;
  background: #292e34;
  border-bottom: 2px solid #000;
  color: #d1d1d1;
  display: flex;
  align-items: center;
  padding-right: 20px;
}
.burger { width: 150px; align-self: stretch; justify-content: center; border-right: 2px solid #000; padding-bottom: 2px; }
.project { margin: 0 auto 0 40px; font-size: 36px; font-weight: 300; gap: 38px; }
.search { width: 600px; height: 52px; border: 2px solid #000; display: flex; align-items: center; padding-left: 9px; gap: 14px; margin-right: 10px; }
.search input { flex: 1; border: 0; background: none; font: italic 24px "Open Sans", sans-serif; padding: 0; }
.search input::placeholder { color: #999; opacity: 1; }
.add { width: 218px; height: 52px; border: 2px solid #000; padding: 0 22px 0 13px; justify-content: space-between; font-weight: 300; white-space: nowrap; }

.body { flex: 1; min-height: 0; display: flex; }
.side { width: 440px; flex: none; background: #292e34; border-right: 1px solid #000; display: flex; flex-direction: column; overflow: hidden; }
.side a {
  flex: none;
  height: 128px;
  border-bottom: 2px solid #000;
  border-top: 1px solid #33383e;
  display: flex;
  align-items: center;
  gap: 26px;
  padding: 0 38px 8px 56px;
  color: #d1d1d1;
  font-size: 26px;
  font-weight: 300;
}
.side svg { width: 36px; height: 36px; }
.side .cubes { width: 44px; margin: 0 -3px 0 -5px; }
.side .book { width: 40px; margin: 0 -2px; }
.side .go { width: 12px; height: 20px; margin-left: auto; color: #72767b; }
.side .current { background: #393f45; border-left: 6px solid #39a5dc; padding-left: 50px; color: #fff; }
.side .current .go { color: #fff; }

.content { flex: 1; min-width: 0; overflow: hidden; padding: 0 40px; color: #363636; }
.form { max-width: 1662px; margin-top: -19px; line-height: 36px; }
.check { display: flex; align-items: center; gap: 16px; margin-bottom: 34px; font-weight: 400; }
.check input { appearance: none; width: 24px; height: 24px; margin: 0; border: 1px solid #bbb; border-radius: 6px; background: #fff; }
.field { margin-bottom: 30px; }
.field.required { margin-top: 32px; }
.field > label { display: block; font-weight: 600; margin-bottom: 12px; }
.field > label span { margin: 0 7px 0 -20px; }
.field input, .field select {
  width: 100%;
  height: 52px;
  display: block;
  border: 2px solid #bbb;
  border-radius: 2px;
  background: #fff;
  box-shadow: inset 0 2px 2px rgba(3, 3, 3, .08);
  color: #363636;
  font: 24px "Open Sans", sans-serif;
  padding: 0 12px;
}
.field select { appearance: none; background: linear-gradient(#fff, #fafafa); color: #4d5258; box-shadow: 0 4px 6px rgba(3, 3, 3, .1); padding-bottom: 2px; }
.pick { position: relative; }
.pick .chev { position: absolute; right: 18px; top: 23px; color: #4d5258; }
.group { display: flex; margin-right: 2px; }
.group input { flex: 1; min-width: 0; }
.group span { width: 118px; height: 52px; border: 2px solid #bbb; border-left: 0; background: #f1f1f1; text-align: center; line-height: 46px; }
.field p { color: #72767b; padding: 12px 0 4px; }
.removal { position: relative; margin-bottom: 37px; }
.removal a { color: #00659c; text-decoration: underline; }
.mark { position: absolute; left: -38px; top: -40px; }
.form h2 { font-size: 32px; font-weight: 400; line-height: 44px; margin-bottom: 17px; }
.intro { color: #72767b; margin-bottom: 24px; }

.hover {
  position: absolute;
  left: 0;
  bottom: 0;
  height: 42px;
  padding: 0 14px 0 10px;
  background: #fbfbfb;
  border-radius: 0 6px 0 0;
  box-shadow: 0 0 3px rgba(0, 0, 0, .5);
  color: #6d6f72;
  font: 24px/42px Inter, sans-serif;
}

/* edge of the window that lies behind the browser */
.behind {
  flex: none;
  height: 26px;
  margin-bottom: 16px;
  border-radius: 0 0 10px 10px;
  background: linear-gradient(#5e5e5e, #909090);
  box-shadow: inset 0 1px #222;
}

/* dock */
.dock {
  flex: none;
  height: 94px;
  margin: 0 58px;
  padding: 0 5px;
  border-radius: 10px 10px 0 0;
  background: linear-gradient(90deg, #687089, #5e6780 50%, #687089);
  display: flex;
}
.app { flex: 1; position: relative; display: flex; justify-content: center; padding-top: 12px; }
.app svg { width: 64px; height: 64px; }
.app .fold { width: 68px; }
.run::after { content: ""; position: absolute; left: 50%; bottom: 4px; width: 8px; height: 8px; margin-left: -4px; border-radius: 50%; background: #000; }
.app em { position: absolute; left: 48px; top: 1px; width: 27px; height: 27px; border-radius: 50%; background: #f24141; color: #fff; font: 18px/27px Inter, sans-serif; text-align: center; }
.sep { width: 36px; flex: none; position: relative; }
.sep::before { content: ""; position: absolute; left: 17px; top: 12px; width: 2px; height: 70px; background: #39435a; }
.early::after { content: ""; position: absolute; left: 33px; bottom: 4px; width: 8px; height: 8px; border-radius: 50%; background: #000; }
.nov { font: 12px Inter, sans-serif; fill: #fff; }
.n18 { font: 28px Inter, sans-serif; fill: #222; }
.t3d { font: 11px Inter, sans-serif; fill: #333; }
.pages { font: bold 9px Inter, sans-serif; fill: #fff; }
```
